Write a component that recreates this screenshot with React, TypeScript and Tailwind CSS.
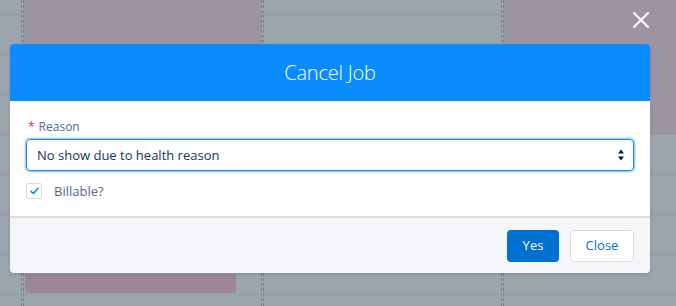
import React from 'react';

const font = { fontFamily: '"Open Sans", "Liberation Sans", sans-serif' };

const Divider = () => (
  <div className="w-[3px] h-full border-x border-dashed border-[#76808a] shrink-0" />
);

const Rows = () => (
  <div className="absolute inset-0 flex flex-col pt-[14px] pointer-events-none">
    {Array.from({ length: 8 }).map((_, i) => (
      <div key={i} className="h-[40px] border-t border-[#8e99a2]/70 shrink-0" />
    ))}
  </div>
);

const Backdrop = () => (
  <div className="absolute inset-0 flex bg-[#9ba5ae]">
    <div className="w-[21px] shrink-0" />
    <Divider />
    <div className="w-[237px] shrink-0 relative">
      <div className="absolute left-0 right-0 top-0 h-[60px] bg-[#9b95a3]" />
      <div className="absolute left-[1px] w-[211px] top-[274px] h-[19px] bg-[#9d8697] rounded-b-[3px]" />
    </div>
    <Divider />
    <div className="w-[237px] shrink-0" />
    <Divider />
    <div className="flex-1 relative">
      <div className="absolute left-0 right-0 top-0 h-[135px] bg-[#9b95a3]" />
    </div>
    <Rows />
  </div>
);

const CloseIcon = () => (
  <svg width="18" height="18" viewBox="0 0 18 18" className="absolute left-[632px] top-[11px]">
    <path d="M2 2 L16 16 M16 2 L2 16" stroke="#ffffff" strokeWidth="2.2" strokeLinecap="round" />
  </svg>
);

const SelectArrows = () => (
  <svg width="8" height="14" viewBox="0 0 8 14" className="shrink-0">
    <path d="M4 1.5 L7 5.5 L1 5.5 Z" fill="#061c3f" />
    <path d="M4 12.5 L7 8.5 L1 8.5 Z" fill="#061c3f" />
  </svg>
);

const Modal = () => (
  <div className="absolute left-[10px] top-[44px] w-[640px] rounded-[4px] shadow-[0_2px_4px_rgba(0,0,0,0.12)] overflow-hidden" style={font}>
    <div className="h-[57px] bg-[#0a8cfe] flex items-center justify-center">
      <h2 className="text-white text-[20px] font-light tracking-[-0.2px]">Cancel Job</h2>
    </div>
    <div className="bg-white px-4 pt-[17px] pb-[17px] border-b-2 border-[#dddbe4]">
      <label className="flex items-center text-[12px] text-[#54698d] leading-[18px] pl-[2px]">
        <span className="text-[#c23934] mr-[4px]">*</span>
        Reason
      </label>
      <div className="mt-[3px] h-[32px] border border-[#1589ee] rounded-[4px] shadow-[0_0_3px_#0070d2] flex items-center justify-between pl-[10px] pr-[8px]">
        <span className="text-[13px] leading-[18px] text-[#16325c]">No show due to health reason</span>
        <SelectArrows />
      </div>
      <div className="mt-[12px] h-[16px] flex items-center">
        <div className="w-[16px] h-[16px] border border-[#dddbda] rounded-[2px] bg-white flex items-center justify-center">
          <svg width="9" height="8" viewBox="0 0 9 8">
            <path d="M1 4.3 L3.4 6.5 L8 1.3" stroke="#1589ee" strokeWidth="1.6" fill="none" strokeLinecap="round" strokeLinejoin="round" />
          </svg>
        </div>
        <span className="ml-[12px] text-[13px] leading-[16px] text-[#54698d]">Billable?</span>
      </div>
    </div>
    <div className="h-[55px] bg-[#f4f6f9] flex items-center justify-end gap-[11px] pr-[16px]">
      <button className="h-[32px] w-[52px] rounded-[4px] bg-[#0070d2] text-white text-[13px]">Yes</button>
      <button className="h-[32px] w-[64px] rounded-[4px] bg-white border border-[#dddbda] text-[#0070d2] text-[13px]">Close</button>
    </div>
  </div>
);

export default function App() {
  return (
    <div className="relative w-[676px] h-[306px] overflow-hidden">
      <Backdrop />
      <CloseIcon />
      <Modal />
    </div>
  );
}
